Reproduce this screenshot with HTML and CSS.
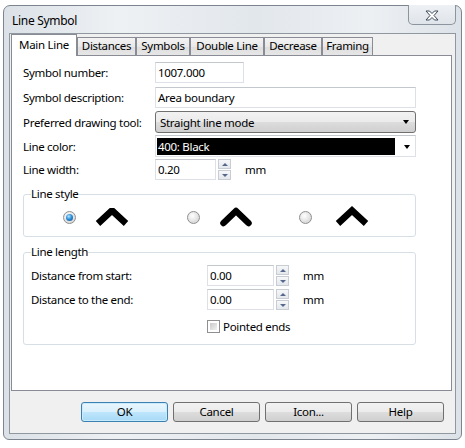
FILE: index.html
```html
<!DOCTYPE html>
<html>
  <head>
    <meta charset="utf-8">
    <title>Line Symbol</title>
    <link rel="stylesheet" href="styles.css">
  </head>
<body>

  <div class="window">
    <div class="titlebar">
      <span class="title">Line Symbol</span>
      <div class="close">
        <svg width="14" height="11" viewBox="0 0 14 11">
          <polygon points="1,1 4.5,1 7,3.5 9.5,1 13,1 9,5.5 13,10 9.5,10 7,7.5 4.5,10 1,10 5,5.5" fill="#fff" stroke="#3d4859" stroke-width="1" stroke-linejoin="round"/>
        </svg>
      </div>
    </div>

    <div class="client">
      <div class="tabs">
        <div class="tab active w-main">Main Line</div>
        <div class="tab w-dist">Distances</div>
        <div class="tab w-sym">Symbols</div>
        <div class="tab w-dbl">Double Line</div>
        <div class="tab w-dec">Decrease</div>
        <div class="tab w-frm">Framing</div>
      </div>

      <div class="panel">
        <div class="row first">
          <label>Symbol number:</label>
          <div class="edit w-num">1007.000</div>
        </div>
        <div class="row">
          <label>Symbol description:</label>
          <div class="edit w-wide">Area boundary</div>
        </div>
        <div class="row combo">
          <label>Preferred drawing tool:</label>
          <div class="dropdown">
            <span>Straight line mode</span>
            <i class="arrow"></i>
          </div>
        </div>
        <div class="row combo">
          <label>Line color:</label>
          <div class="colorbox">
            <span class="swatch">400: Black</span>
            <i class="arrow"></i>
          </div>
        </div>
        <div class="row">
          <label>Line width:</label>
          <div class="edit w-lw">0.20</div>
          <div class="spin"><b class="up"></b><b class="down"></b></div>
          <span class="unit">mm</span>
        </div>

        <fieldset class="group style">
          <legend>Line style</legend>
          <div class="styles">
            <div class="opt">
              <span class="radio on"></span>
              <svg class="chev" width="44" height="24" viewBox="0 0 44 24">
                <polyline points="8,18.5 22,5.5 36,18.5" fill="none" stroke="#000" stroke-width="6.5" stroke-linejoin="bevel" stroke-linecap="butt"/>
              </svg>
            </div>
            <div class="opt">
              <span class="radio"></span>
              <svg class="chev" width="44" height="24" viewBox="0 0 44 24">
                <polyline points="9.5,18 22,6 34.5,18" fill="none" stroke="#000" stroke-width="6.5" stroke-linejoin="round" stroke-linecap="round"/>
              </svg>
            </div>
            <div class="opt">
              <span class="radio"></span>
              <svg class="chev last" width="44" height="24" viewBox="0 0 44 24">
                <polyline points="8,18.5 22,5.5 36,18.5" fill="none" stroke="#000" stroke-width="6.5" stroke-linejoin="miter" stroke-linecap="butt"/>
              </svg>
            </div>
          </div>
        </fieldset>

        <fieldset class="group length">
          <legend>Line length</legend>
          <div class="lrow">
            <label>Distance from start:</label>
            <div class="edit w-dist-in">0.00</div>
            <div class="spin"><b class="up"></b><b class="down"></b></div>
            <span class="unit">mm</span>
          </div>
          <div class="lrow">
            <label>Distance to the end:</label>
            <div class="edit w-dist-in">0.00</div>
            <div class="spin"><b class="up"></b><b class="down"></b></div>
            <span class="unit">mm</span>
          </div>
          <div class="lrow check-row">
            <label></label>
            <span class="check"><i></i></span>
            <span>Pointed ends</span>
          </div>
        </fieldset>
      </div>

      <div class="buttons">
        <div class="btn default">OK</div>
        <div class="btn">Cancel</div>
        <div class="btn">Icon...</div>
        <div class="btn">Help</div>
      </div>
    </div>
  </div>

</body>
</html>
```

FILE: styles.css
```css
body {
  margin: 0;
  background: #fff;
  font: 11.5px "Noto Sans", "Open Sans", sans-serif;
  letter-spacing: -0.3px;
  color: #000;
}

/* window frame */
.window {
  margin: 5px 0 0 3px;
  width: 459px;
  height: 435px;
  box-sizing: border-box;
  border: 1px solid #7c858f;
  border-radius: 7px 7px 6px 6px;
  padding: 0 5px 5px;
  background: linear-gradient(90deg, #dbe1e7 0%, #eef1f4 25%, #e2e7ec 55%, #edf0f3 80%, #dce2e8 100%);
  display: flex;
  flex-direction: column;
}

.titlebar { display: flex; height: 27px; }
.titlebar .title { padding: 7px 0 0 3px; line-height: 15px; flex: 1; font-size: 12px; }

.close {
  width: 48px;
  height: 20px;
  margin-top: -1px;
  box-sizing: border-box;
  border: 1px solid #8c949d;
  border-top: none;
  border-radius: 0 0 5px 5px;
  background: linear-gradient(#eef1f4, #dfe4ea);
  display: flex;
  align-items: center;
  justify-content: center;
}
.close svg { display: block; margin-top: 1px; }

.client {
  height: 401px;
  box-sizing: border-box;
  border: 1px solid #8f979f;
  background: #f0f0f0;
  padding-top: 1px;
}

/* tabs */
.tabs { display: flex; align-items: flex-end; height: 20px; margin-left: 1px; }
.tab {
  box-sizing: border-box;
  height: 18px;
  line-height: 16px;
  text-align: center;
  border: 1px solid #898c95;
  border-bottom: none;
  background: linear-gradient(#f3f3f3, #e9e9e9 50%, #dedede 51%, #e6e6e6);
}
.tab.active {
  height: 22px;
  line-height: 19px;
  margin-bottom: -1px;
  position: relative;
  z-index: 1;
  background: #fff;
}
.w-main { width: 66px; }
.w-dist { width: 59px; }
.w-sym { width: 54px; }
.w-dbl { width: 74px; }
.w-dec { width: 58px; }
.w-frm { width: 51px; }

.panel {
  margin-left: 1px;
  width: 441px;
  height: 336px;
  box-sizing: border-box;
  border: 1px solid #898c95;
  background: #fff;
  padding: 6px 0 0 11px;
}

/* field rows */
.row { display: flex; align-items: center; height: 21px; margin-bottom: 3px; }
.row.first { margin-bottom: 4px; }
.row.combo { height: 22px; margin-bottom: 2px; }
.row > label { width: 132px; }

.edit {
  box-sizing: border-box;
  height: 21px;
  line-height: 19px;
  padding-left: 2px;
  border: 1px solid #dde0e6;
  border-top-color: #c3c7ce;
}
.w-num { width: 89px; }
.w-wide { width: 261px; }
.w-lw { width: 61px; }
.w-dist-in { width: 67px; }

.dropdown {
  box-sizing: border-box;
  width: 261px;
  height: 22px;
  border: 1px solid #707070;
  border-radius: 3px;
  background: linear-gradient(#f2f2f2, #ebebeb 50%, #dddddd 51%, #cfcfcf);
  display: flex;
  align-items: center;
  padding: 0 6px 0 4px;
}
.dropdown span, .colorbox .swatch { flex: 1; }

.arrow {
  width: 0;
  height: 0;
  border-left: 3.5px solid transparent;
  border-right: 3.5px solid transparent;
  border-top: 4px solid #000;
}

.colorbox {
  box-sizing: border-box;
  width: 261px;
  height: 22px;
  border: 1px solid #dde0e6;
  border-top-color: #c3c7ce;
  display: flex;
  align-items: center;
  padding: 2px 5px 1px 1px;
  gap: 9px;
}
.colorbox .swatch {
  align-self: stretch;
  background: #000;
  color: #fff;
  line-height: 17px;
  padding-left: 1px;
}

.spin { display: flex; flex-direction: column; gap: 1px; margin-left: 2px; }
.spin b {
  display: flex;
  align-items: center;
  justify-content: center;
  box-sizing: border-box;
  width: 13px;
  height: 10px;
  border: 1px solid #c8ccd3;
  background: linear-gradient(#f6f7f9, #e4e7ec);
}
.spin b::after {
  content: "";
  border-left: 3px solid transparent;
  border-right: 3px solid transparent;
}
.spin .up::after { border-bottom: 3px solid #56688c; }
.spin .down::after { border-top: 3px solid #56688c; }

.unit { margin-left: 14px; }

/* group boxes */
.group {
  margin: 0;
  width: 393px;
  box-sizing: border-box;
  border: 1px solid #d5dfe5;
  border-radius: 3px;
  padding: 0 0 0 7px;
}
.group legend { padding: 0; line-height: 14px; }
.group.style { margin-top: 7px; padding-top: 4px; padding-bottom: 7px; }
.group.length { margin-top: 8px; padding-top: 6px; padding-bottom: 10px; }

.styles {
  display: grid;
  grid-template-columns: 124px 112px auto;
  margin-left: 32px;
}
.opt { display: flex; align-items: center; height: 24px; }
.chev { display: block; margin-left: 14px; }
.chev.last { margin-left: 18px; }

.radio {
  width: 13px;
  height: 13px;
  box-sizing: border-box;
  border-radius: 50%;
  border: 1px solid #8e8f8f;
  background: radial-gradient(circle at 40% 35%, #ffffff, #d6d6d6 80%);
  display: flex;
  align-items: center;
  justify-content: center;
}
.radio.on::after {
  content: "";
  width: 7px;
  height: 7px;
  border-radius: 50%;
  background: radial-gradient(circle at 40% 35%, #b4e8ff 0, #2f8fd8 45%, #0b4a8f 100%);
}

.lrow { display: flex; align-items: center; height: 21px; margin-bottom: 3px; }
.lrow > label { width: 176px; }
.lrow.check-row { margin-top: 9px; margin-bottom: 0; height: 15px; }

.check {
  width: 13px;
  height: 13px;
  box-sizing: border-box;
  border: 1px solid #8f8f8f;
  background: #fff;
  padding: 2px;
  margin-right: 3px;
}
.check i {
  display: block;
  height: 100%;
  background: linear-gradient(135deg, #c9c9c9, #f2f2f2);
}

/* bottom buttons */
.buttons {
  display: flex;
  justify-content: flex-end;
  gap: 5px;
  padding: 11px 11px 0 0;
}
.btn {
  width: 87px;
  height: 20px;
  box-sizing: border-box;
  border: 1px solid #707070;
  border-radius: 3px;
  background: linear-gradient(#f2f2f2, #ebebeb 50%, #dddddd 51%, #cfcfcf);
  text-align: center;
  line-height: 18px;
}
.btn.default {
  border-color: #3c7fb1;
  background: linear-gradient(#eaf6fd, #d9f0fc 50%, #bee6fd 51%, #a7d9f5);
  box-shadow: inset 0 0 0 1px #c8ecfb;
}
```
